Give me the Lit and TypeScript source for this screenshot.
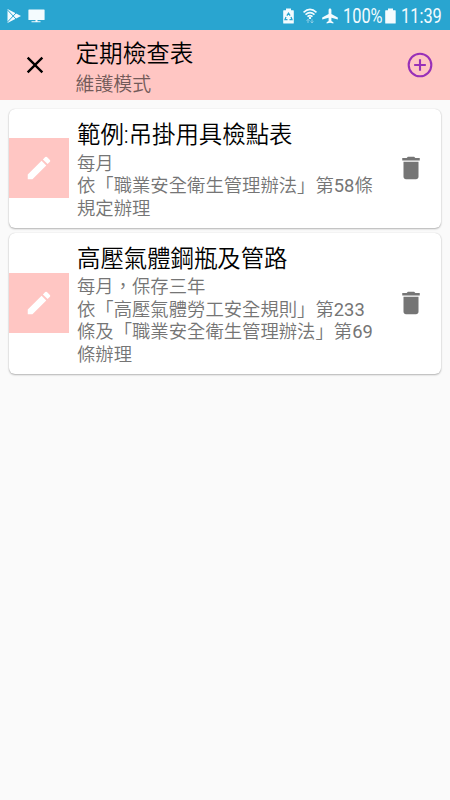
import { LitElement, html, css } from "lit";
import { customElement, property } from "lit/decorators.js";

interface Checklist {
  title: string;
  lines: string[];
}

const checklists: Checklist[] = [
  {
    title: "範例:吊掛用具檢點表",
    lines: ["每月", "依「職業安全衛生管理辦法」第58條", "規定辦理"],
  },
  {
    title: "高壓氣體鋼瓶及管路",
    lines: ["每月，保存三年", "依「高壓氣體勞工安全規則」第233", "條及「職業安全衛生管理辦法」第69", "條辦理"],
  },
];

@customElement("status-bar")
export class StatusBar extends LitElement {
  static styles = css`
    :host {
      display: flex;
      align-items: center;
      height: 30px;
      box-sizing: border-box;
      padding: 2px 7px 0 7px;
      background: #29a5d0;
      color: #f4fbfe;
      font: 400 19.5px/28px Roboto, sans-serif;
    }
    svg { display: block; flex: none; }
    .play { margin-right: 7px; }
    .space { flex: 1; }
    .recycle { margin-right: 9px; }
    .wifi { margin-right: 5px; }
    .plane { margin-right: 5px; }
    .percent { width: 41px; white-space: nowrap; }
    .text { display: block; padding-top: 1px; transform-origin: left; transform: scaleX(0.84); }
    .cell { margin-right: 5px; margin-left: 1px; }
    .time { width: 42px; white-space: nowrap; }
  `;

  render() {
    return html`
      <svg class="play" width="14" height="16" viewBox="0 0 14 16">
        <path d="M.5 1 14 8 .5 15z" fill="#f4fbfe" />
        <path d="M0 1.5 9.5 11.5M0 14.5 9.5 4.5" stroke="#29a5d0" stroke-width="1" fill="none" />
      </svg>
      <svg width="17" height="14" viewBox="0 0 17 14" fill="#f4fbfe">
        <path d="M1 .5h15a.6.6 0 0 1 .6.6v9.3a.6.6 0 0 1-.6.6H1a.6.6 0 0 1-.6-.6V1.1A.6.6 0 0 1 1 .5zM7.5 11h2v1.2h3v1h-9v-1h4z" />
      </svg>
      <span class="space"></span>
      <svg class="recycle" width="11" height="16" viewBox="0 0 11 16">
        <path d="M3 .5h5v1.7h2.2q.6 0 .6.6V15q0 .6-.6.6H.8q-.6 0-.6-.6V2.8q0-.6.6-.6H3z" fill="#f4fbfe" />
        <path d="M3.9 7.6 5.5 5.2 7.1 7.6M8 8.9 9 11.6H6.5M4.5 11.6H2L3 8.9" stroke="#29a5d0" stroke-width="1.3" fill="none" />
      </svg>
      <svg class="wifi" width="14" height="16" viewBox="0 0 14 16" fill="none" stroke="#f4fbfe">
        <path d="M.5 4.4Q7-1.6 13.5 4.4M2.5 6.6Q7 2.8 11.5 6.6M4.5 8.7Q7 6.6 9.5 8.7" stroke-width="1.6" />
        <circle cx="7" cy="9.9" r="1.2" fill="#f4fbfe" stroke="none" />
        <g stroke="#8dcde5" stroke-width="1">
          <path d="M5 15v-3.7M3.6 12.8 5 11.3l1.4 1.5M9 11.3V15M7.6 13.5 9 15l1.4-1.5" />
        </g>
      </svg>
      <svg class="plane" width="16" height="16" viewBox="0 0 16 16" fill="#f4fbfe">
        <path d="M8 .5c.9 0 1.4.7 1.4 1.5v4l6.4 3.6v1.8L9.4 9.8v3.1l2 1.4v1.2L8 14.8l-3.4.7v-1.2l2-1.4V9.8L.2 11.4V9.6L6.6 6V2C6.6 1.2 7.1.5 8 .5z" />
      </svg>
      <span class="percent"><span class="text">100%</span></span>
      <svg class="cell" width="11" height="16" viewBox="0 0 11 16" fill="#f4fbfe">
        <path d="M3 .5h5v1.7h2.2q.5 0 .5.6V15q0 .6-.6.6H.8q-.6 0-.6-.6V2.8q0-.6.6-.6H3z" />
      </svg>
      <span class="time"><span class="text">11:39</span></span>
    `;
  }
}

@customElement("title-bar")
export class TitleBar extends LitElement {
  static styles = css`
    :host {
      display: flex;
      align-items: center;
      height: 70px;
      box-sizing: border-box;
      padding: 0 16px 0 21px;
      background: #ffc6c3;
    }
    svg { display: block; flex: none; }
    .headings { flex: 1; margin-left: 26.5px; padding-top: 7px; white-space: nowrap; }
    .title { font-size: 23.6px; line-height: 31px; color: #000; }
    .subtitle { font-size: 18.9px; line-height: 29px; color: #735a59; }
  `;

  render() {
    return html`
      <svg width="28" height="28" viewBox="0 0 24 24">
        <path d="M19 6.41 17.59 5 12 10.59 6.41 5 5 6.41 10.59 12 5 17.59 6.41 19 12 13.41 17.59 19 19 17.59 13.41 12z" />
      </svg>
      <div class="headings">
        <div class="title">定期檢查表</div>
        <div class="subtitle">維護模式</div>
      </div>
      <svg width="28" height="28" viewBox="0 0 24 24" fill="none" stroke="#9830b8" stroke-width="1.8">
        <circle cx="12" cy="12" r="9.7" />
        <path d="M12 7v10M7 12h10" />
      </svg>
    `;
  }
}

@customElement("checklist-card")
export class ChecklistCard extends LitElement {
  @property({ attribute: false }) item!: Checklist;

  static styles = css`
    :host {
      display: flex;
      align-items: center;
      box-sizing: border-box;
      background: #fff;
      border-radius: 6px;
      box-shadow: 0 1px 2px rgba(0, 0, 0, 0.28), 0 0 1px rgba(0, 0, 0, 0.18);
    }
    svg { display: block; flex: none; }
    .edit {
      width: 60px;
      height: 60px;
      flex: none;
      display: grid;
      place-items: center;
      background: #ffc6c3;
    }
    .body { flex: 1; padding: 9px 0 7.5px 8px; white-space: nowrap; }
    .title { font-size: 23.4px; line-height: 34.6px; color: #000; }
    .line { font-size: 18.35px; line-height: 22.5px; color: #757575; }
    .number { font-weight: 400; }
    .delete { margin-right: 15px; }
  `;

  private renderLine(line: string) {
    return line
      .split(/(\d+)/)
      .map((part) => (/^\d+$/.test(part) ? html`<span class="number">${part}</span>` : part));
  }

  render() {
    return html`
      <div class="edit">
        <svg width="30" height="30" viewBox="0 0 24 24" fill="#fff">
          <path d="M3 17.25V21h3.75L17.81 9.94l-3.75-3.75L3 17.25zM20.71 7.04a1 1 0 0 0 0-1.41l-2.34-2.34a1 1 0 0 0-1.41 0l-1.83 1.83 3.75 3.75 1.83-1.83z" />
        </svg>
      </div>
      <div class="body">
        <div class="title">${this.item.title}</div>
        ${this.item.lines.map((line) => html`<div class="line">${this.renderLine(line)}</div>`)}
      </div>
      <svg class="delete" width="30" height="30" viewBox="0 0 24 24" fill="#757575">
        <path d="M6 19c0 1.1.9 2 2 2h8c1.1 0 2-.9 2-2V7H6v12zM19 4h-3.5l-1-1h-5l-1 1H5v2h14V4z" />
      </svg>
    `;
  }
}

@customElement("app-root")
export class AppRoot extends LitElement {
  static styles = css`
    :host {
      display: flex;
      flex-direction: column;
      height: 100vh;
      background: #fafafa;
      font-family: Roboto, "Noto Sans CJK TC", sans-serif;
      font-weight: 350;
    }
    .list {
      display: flex;
      flex-direction: column;
      gap: 5px;
      padding: 9px 9px 0;
    }
  `;

  render() {
    return html`
      <status-bar></status-bar>
      <title-bar></title-bar>
      <main class="list">
        ${checklists.map((item) => html`<checklist-card .item=${item}></checklist-card>`)}
      </main>
    `;
  }
}
